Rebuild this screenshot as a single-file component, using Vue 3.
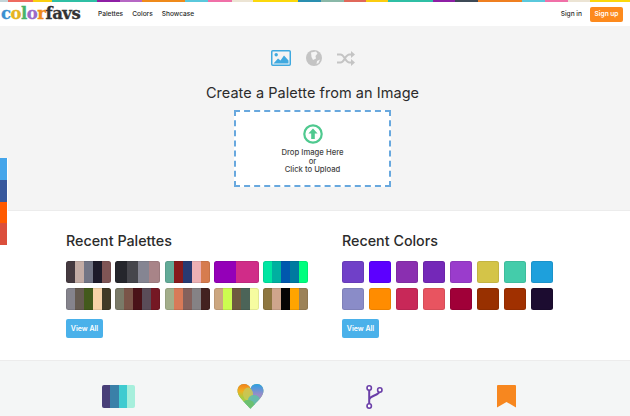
<template>
  <div class="page">
    <div class="stripe">
      <i v-for="(s, i) in stripe" :key="i" :style="{ flex: s[0], background: s[1] }"></i>
    </div>
    <header class="topbar">
      <div class="logo">
        <span v-for="(l, i) in logoColor" :key="i" :style="{ color: l[1] }">{{ l[0] }}</span><span class="favs">favs</span>
      </div>
      <nav class="nav">
        <a>Palettes</a>
        <a>Colors</a>
        <a>Showcase</a>
      </nav>
      <a class="signin">Sign in</a>
      <a class="signup">Sign up</a>
    </header>

    <section class="hero">
      <div class="modes">
        <svg width="20" height="16" viewBox="0 0 20 16">
          <rect x="0.75" y="0.75" width="18.5" height="14.5" rx="1" fill="none" stroke="#3fa9e0" stroke-width="1.5" />
          <circle cx="5.2" cy="4.8" r="1.7" fill="#3fa9e0" />
          <path d="M2.5 13.5 L7 8.5 L9.5 10.5 L13 5.5 L17.5 10.5 V13.5 Z" fill="#3fa9e0" />
        </svg>
        <svg width="16" height="16" viewBox="0 0 16 16">
          <circle cx="8" cy="8" r="8" fill="#c4c4c4" />
          <path d="M5 2.5 L10 1.5 L11.5 3.5 L9.5 6 L10 8.5 L7 10 L5.5 7 Z M11 11 L14 9.5 L12.5 13 L10.5 14 Z" fill="#f4f4f4" />
        </svg>
        <svg width="18" height="15" viewBox="0 0 18 15">
          <path d="M0 3.5 H3.5 C7.5 3.5 8 11.5 12.5 11.5 H15 M0 11.5 H3.5 C7.5 11.5 8 3.5 12.5 3.5 H15" fill="none" stroke="#c4c4c4" stroke-width="2" />
          <path d="M14 0 L18 3.5 L14 7 Z M14 8 L18 11.5 L14 15 Z" fill="#c4c4c4" />
        </svg>
      </div>
      <h1>Create a Palette from an Image</h1>
      <div class="drop">
        <svg width="20" height="20" viewBox="0 0 20 20">
          <circle cx="10" cy="10" r="8.7" fill="#fff" stroke="#4fc98f" stroke-width="2.2" />
          <path d="M10 4.6 L14.6 9.6 H11.8 V15 H8.2 V9.6 H5.4 Z" fill="#4fc98f" />
        </svg>
        <p>Drop Image Here<br />or<br />Click to Upload</p>
      </div>
    </section>

    <section class="recent">
      <div class="col col-palettes">
        <h2>Recent Palettes</h2>
        <div class="palette-grid">
          <div v-for="(p, i) in palettes" :key="i" class="palette">
            <i v-for="(c, j) in p" :key="j" :style="{ background: c }"></i>
          </div>
        </div>
        <a class="view-all">View All</a>
      </div>
      <div class="col col-colors">
        <h2>Recent Colors</h2>
        <div class="color-grid">
          <div v-for="c in colors" :key="c" class="swatch" :style="{ background: c }"></div>
        </div>
        <a class="view-all">View All</a>
      </div>
    </section>

    <section class="features">
      <div class="feature">
        <div class="mini-palette">
          <i style="background:#483f78"></i><i style="background:#3a80a8"></i><i style="background:#3fcbd0"></i><i style="background:#a6efdc"></i>
        </div>
      </div>
      <div class="feature">
        <svg class="heart" width="27" height="25" viewBox="0 0 27 25">
          <defs>
            <clipPath id="heart"><path d="M13.5 25 C11 22 5 16 2.5 12.5 C-1.5 7 1 0 7 0 C10 0 12.5 1.5 13.5 4.5 C14.5 1.5 17 0 20 0 C26 0 28.5 7 24.5 12.5 C22 16 16 22 13.5 25 Z" /></clipPath>
            <linearGradient id="heart-left" x1="0" y1="0" x2="0" y2="1">
              <stop offset="0" stop-color="#f5801a" />
              <stop offset="0.4" stop-color="#f0b020" />
              <stop offset="0.75" stop-color="#a8cc40" />
            </linearGradient>
            <linearGradient id="heart-right" x1="0" y1="0" x2="0" y2="1">
              <stop offset="0" stop-color="#2a9fe4" />
              <stop offset="0.6" stop-color="#9a8cc8" />
            </linearGradient>
          </defs>
          <g clip-path="url(#heart)">
            <rect width="27" height="25" fill="#6cc080" />
            <rect width="13.5" height="18" fill="url(#heart-left)" />
            <rect x="13.5" width="13.5" height="18" fill="url(#heart-right)" />
            <ellipse cx="11" cy="10" rx="5" ry="6.5" fill="#c8c858" opacity="0.85" />
            <ellipse cx="17" cy="16" rx="6" ry="5" fill="#62bfa8" opacity="0.9" />
            <ellipse cx="11" cy="20" rx="6" ry="4" fill="#6cc070" />
          </g>
        </svg>
      </div>
      <div class="feature">
        <svg width="17" height="24" viewBox="0 0 17 24">
          <path d="M3.2 4.5 V19 M3.2 15 C3.2 10 13.8 11 13.8 5.5" fill="none" stroke="#6a3fa8" stroke-width="2" />
          <circle cx="3.2" cy="3" r="2.2" fill="#fff" stroke="#6a3fa8" stroke-width="1.6" />
          <circle cx="13.8" cy="5" r="2.2" fill="#fff" stroke="#6a3fa8" stroke-width="1.6" />
          <circle cx="3.2" cy="21" r="2.2" fill="#fff" stroke="#6a3fa8" stroke-width="1.6" />
        </svg>
      </div>
      <div class="feature">
        <svg width="19" height="23" viewBox="0 0 19 23">
          <path d="M0 1 Q0 0 1 0 H18 Q19 0 19 1 V22.5 L9.5 17 L0 22.5 Z" fill="#f7871f" />
        </svg>
      </div>
    </section>

    <div class="social">
      <i style="background:#45a5ea"></i>
      <i style="background:#38589c"></i>
      <i style="background:#ff5a00"></i>
      <i style="background:#db4f3c"></i>
    </div>
  </div>
</template>

<script setup>
// [width, colour] of each stripe segment, left to right
const stripe = [
  [8, '#c3d4d8'], [25, '#ee6b60'], [19, '#fbcf10'], [45, '#2fbfa5'], [23, '#8e1fa5'], [22, '#b667c4'],
  [43, '#ef8a1a'], [23, '#5ac8dc'], [24, '#f070a8'], [21, '#ece4d4'], [45, '#fbd80c'],
  [23, '#2a8fb0'], [23, '#8ab8a8'], [22, '#e0685a'], [22, '#fbcc10'], [45, '#2fbfa5'],
  [22, '#8e1fa5'], [23, '#3e4a56'], [44, '#ef7f20'], [23, '#5ac8dc'], [23, '#f070a8'], [22, '#ece4d4'], [40, '#fbd80c']
]

const logoColor = [
  ['c', '#3a8fd0'], ['o', '#e6b422'], ['l', '#49b36a'], ['o', '#9a6ac8'], ['r', '#ef8a1a']
]

const palettes = [
  ['#453a40', '#c3aca5', '#727585', '#1d1b2a', '#7f5555'],
  ['#25262c', '#46464c', '#858592', '#a88488'],
  ['#62ab98', '#871a1c', '#283a72', '#ecb0b4', '#d67c4f'],
  ['#9400b8', '#d02c88'],
  ['#00e6a2', '#00b0a0', '#0058ae', '#007aa0', '#00ff7e'],
  ['#85838c', '#655a50', '#435a1c', '#f7d3a8', '#413a26'],
  ['#7a7a68', '#7a5448', '#4a1218', '#5a4c58', '#751824'],
  ['#a3ae8a', '#d87a58', '#85615c', '#858285', '#432220'],
  ['#cca780', '#ccfc50', '#6e5a40', '#4c6458', '#f6fca0'],
  ['#8e7640', '#cfa58c', '#060404', '#ffa400', '#9c8258']
]

const colors = [
  '#7040c8', '#5c00ff', '#8a2fb0', '#7428b8', '#9a3ccc', '#d4c448', '#44ccaa', '#1ea0dc',
  '#8a8cc8', '#ff8c00', '#c82858', '#e85460', '#a00038', '#983000', '#a03000', '#1c0c30'
]
</script>

<style scoped>
.page {
  position: relative;
  width: 630px;
  height: 416px;
  overflow: hidden;
  background: #fff;
  font-family: Inter, "Liberation Sans", sans-serif;
  color: #2b2b2b;
}

.stripe {
  display: flex;
  height: 2px;
}

.topbar {
  display: flex;
  align-items: center;
  height: 24px;
  padding: 0 7px 0 1px;
  font-size: 6.6px;
  font-weight: 500;
}

.logo {
  width: 97px;
  margin-top: -2px;
  font-family: "DejaVu Serif", serif;
  font-size: 16.5px;
  font-weight: 700;
  letter-spacing: -0.5px;
  -webkit-text-stroke: 0.3px currentColor;
}

.favs {
  color: #333;
}

.nav {
  display: flex;
  flex: 1;
  gap: 9px;
}

.signin {
  margin-right: 8px;
}

.signup {
  width: 33px;
  border-radius: 2px;
  background: #fd8a1d;
  color: #fff;
  font-weight: 600;
  line-height: 15px;
  text-align: center;
}

.hero {
  display: flex;
  flex-direction: column;
  align-items: center;
  height: 184px;
  padding: 24px 5px 0 0;
  box-sizing: border-box;
  background: #f4f4f4;
}

.modes {
  display: flex;
  align-items: center;
  gap: 15px;
  height: 16px;
}

h1 {
  margin: 17px 0 7px;
  font-size: 14.5px;
  font-weight: 400;
  line-height: 20px;
  letter-spacing: 0.05px;
}

.drop {
  display: flex;
  flex-direction: column;
  align-items: center;
  width: 157px;
  height: 77px;
  padding-top: 12px;
  box-sizing: border-box;
  border: 2px dashed #68a8de;
  background: #fff;
}

.drop p {
  margin: 5px 0 0;
  font-size: 7.7px;
  font-weight: 500;
  line-height: 8.5px;
  text-align: center;
  color: #444;
}

.recent {
  display: flex;
  height: 151px;
  padding: 21px 0 0 66px;
  box-sizing: border-box;
  border-top: 1px solid #ececec;
  border-bottom: 1px solid #ececec;
}

.col-palettes {
  width: 276px;
}

h2 {
  margin: 0 0 11px;
  font-size: 14.3px;
  font-weight: 500;
  line-height: 18px;
  color: #2b2b2b;
}

.palette-grid {
  display: grid;
  grid-template-columns: repeat(5, 45px);
  column-gap: 4.3px;
  row-gap: 5px;
}

.palette {
  position: relative;
  display: flex;
  height: 22px;
  overflow: hidden;
  border-radius: 2.5px;
}

.palette::after {
  content: "";
  position: absolute;
  inset: 0;
  border-radius: 2.5px;
  box-shadow: inset 0 0 0 1px rgba(0, 0, 0, 0.08);
}

.palette i {
  flex: 1;
}

.color-grid {
  display: grid;
  grid-template-columns: repeat(8, 22px);
  gap: 5px;
}

.swatch {
  height: 22px;
  border-radius: 2.5px;
  box-shadow: inset 0 0 0 1px rgba(0, 0, 0, 0.08);
}

.view-all {
  display: block;
  width: 37px;
  margin-top: 9px;
  border-radius: 2px;
  background: #4ab1ea;
  color: #fff;
  font-size: 7px;
  font-weight: 600;
  line-height: 19px;
  text-align: center;
}

.features {
  display: grid;
  grid-template-columns: 135px 129px 131px 1fr;
  height: 55px;
  padding: 24px 0 0 102px;
  box-sizing: border-box;
  background: #f4f6f6;
}

.feature {
  display: flex;
  align-items: flex-start;
}

.heart {
  margin-top: -1px;
}

.mini-palette {
  display: flex;
  width: 33px;
  height: 23px;
  overflow: hidden;
  border-radius: 2px;
}

.mini-palette i {
  flex: 1;
}

.social {
  position: absolute;
  top: 158px;
  left: 0;
  width: 7px;
  border-right: 1px solid #fff;
}

.social i {
  display: block;
  height: 21.75px;
}
</style>

<style>
html,
body {
  margin: 0;
}
</style>
